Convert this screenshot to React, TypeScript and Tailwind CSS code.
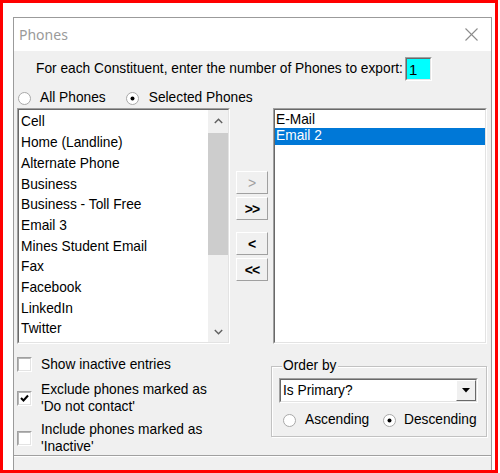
import React from "react";

const font = "font-['Liberation_Sans',Arial,sans-serif]";

function Sunken({ className = "", inner = "bg-white", children }: { className?: string; inner?: string; children?: React.ReactNode }) {
  return (
    <div className={`border border-t-[#a0a0a0] border-l-[#a0a0a0] border-b-white border-r-white ${className}`}>
      <div className={`h-full w-full border border-t-[#696969] border-l-[#696969] border-b-[#e3e3e3] border-r-[#e3e3e3] ${inner}`}>
        {children}
      </div>
    </div>
  );
}

function Radio({ checked }: { checked?: boolean }) {
  return (
    <svg width="13" height="13" viewBox="0 0 13 13" className="shrink-0">
      <circle cx="6.5" cy="6.5" r="6" fill="#ffffff" stroke="#a8a8a8" strokeWidth="1" />
      {checked && <circle cx="6.5" cy="6.5" r="2" fill="#000000" />}
    </svg>
  );
}

function Check({ checked }: { checked?: boolean }) {
  return (
    <div className="h-[15px] w-[15px] shrink-0 border border-t-[#a0a0a0] border-l-[#a0a0a0] border-b-white border-r-white">
      <div className="flex h-full w-full items-center justify-center border border-t-[#b5b5b5] border-l-[#b5b5b5] border-b-[#e3e3e3] border-r-[#e3e3e3] bg-white">
        {checked && (
          <svg width="9" height="9" viewBox="0 0 9 9">
            <polyline points="1,4 3.5,6.5 8,1.5" fill="none" stroke="#000" strokeWidth="2" />
          </svg>
        )}
      </div>
    </div>
  );
}

function Btn({ children, className = "" }: { children: React.ReactNode; className?: string }) {
  return (
    <div
      className={`flex h-[23px] w-[32px] items-center justify-center border border-t-white border-l-white border-b-[#a0a0a0] border-r-[#a0a0a0] bg-[#f0f0f0] text-[14px] leading-none ${className}`}
    >
      {children}
    </div>
  );
}

const leftItems = [
  "Cell",
  "Home (Landline)",
  "Alternate Phone",
  "Business",
  "Business - Toll Free",
  "Email 3",
  "Mines Student Email",
  "Fax",
  "Facebook",
  "LinkedIn",
  "Twitter",
];

export default function App() {
  return (
    <div className={`h-[473px] w-[500px] overflow-hidden bg-white ${font} text-[13.75px] text-black`}>
      <div className="h-[473px] w-[498px] overflow-hidden border-[3px] border-[#ff0000] bg-white pl-[10px] pt-[14px]">
        <div className="flex h-[460px] w-[479px] flex-col border border-[#9b9b9b] bg-[#f0f0f0]">
          {/* title bar */}
          <div className="flex h-[33px] shrink-0 items-center justify-between bg-white pl-[5px] pr-[13px]">
            <span className="font-['Noto_Sans',sans-serif] text-[14px] text-[#9a9a9a]">Phones</span>
            <svg width="13" height="13" viewBox="0 0 13 13">
              <line x1="0.5" y1="0.5" x2="12.5" y2="12.5" stroke="#8c8c8c" strokeWidth="1.1" />
              <line x1="12.5" y1="0.5" x2="0.5" y2="12.5" stroke="#8c8c8c" strokeWidth="1.1" />
            </svg>
          </div>

          {/* body */}
          <div className="flex flex-1 flex-col">
            <div className="mt-[6px] flex h-[24px] items-center pl-[22px]">
              <span className="leading-none">For each Constituent, enter the number of Phones to export:</span>
              <Sunken className="ml-[2px] h-[24px] w-[27px]" inner="bg-[#00ffff]">
                <div className="flex h-full items-center pl-[2px] text-[15px] leading-none">1</div>
              </Sunken>
            </div>

            <div className="mt-[9px] flex h-[16px] items-center pl-[4px]">
              <Radio />
              <span className="ml-[9px] leading-none">All Phones</span>
              <span className="ml-[20px]">
                <Radio checked />
              </span>
              <span className="ml-[10px] leading-none">Selected Phones</span>
            </div>

            <div className="mt-[2px] flex h-[236px] pl-[3px]">
              <Sunken className="h-[236px] w-[213px]">
                <div className="flex h-full">
                  <div className="flex-1 pt-[2px]">
                    {leftItems.map((t) => (
                      <div key={t} className="flex h-[20.7px] items-center pl-[2px] leading-none">
                        {t}
                      </div>
                    ))}
                  </div>
                  <div className="flex w-[20px] flex-col bg-[#f0f0f0]">
                    <div className="flex h-[21px] items-center justify-center">
                      <svg width="9" height="6" viewBox="0 0 9 6">
                        <polyline points="0.8,5 4.5,1.2 8.2,5" fill="none" stroke="#606060" strokeWidth="1.4" />
                      </svg>
                    </div>
                    <div className="mt-[2px] h-[122px] bg-[#cdcdcd]" />
                    <div className="flex-1" />
                    <div className="flex h-[21px] items-center justify-center">
                      <svg width="9" height="6" viewBox="0 0 9 6">
                        <polyline points="0.8,1 4.5,4.8 8.2,1" fill="none" stroke="#606060" strokeWidth="1.4" />
                      </svg>
                    </div>
                  </div>
                </div>
              </Sunken>

              <div className="ml-[6px] flex w-[32px] flex-col pt-[63px]">
                <Btn className="text-[#a0a0a0]">&gt;</Btn>
                <Btn className="mt-[3px] font-bold tracking-[-1px]">&gt;&gt;</Btn>
                <Btn className="mt-[12px] font-bold">&lt;</Btn>
                <Btn className="mt-[3px] font-bold tracking-[-1px]">&lt;&lt;</Btn>
              </div>

              <Sunken className="ml-[5px] h-[236px] w-[214px]">
                <div className="pt-[1.5px]">
                  <div className="flex h-[16.5px] items-center pl-[1px] leading-none">E-Mail</div>
                  <div className="flex h-[16.5px] items-center bg-[#0078d7] pl-[1px] leading-none text-white">Email 2</div>
                </div>
              </Sunken>
            </div>

            <div className="flex pl-[3px]">
              <div className="flex w-[254px] flex-col">
                <div className="mt-[13px] flex h-[15px] items-center gap-[9px]">
                  <Check />
                  <span className="leading-none">Show inactive entries</span>
                </div>
                <div className="mt-[10px] flex items-center gap-[9px]">
                  <Check checked />
                  <span className="leading-[16.5px]">
                    Exclude phones marked as
                    <br />
                    'Do not contact'
                  </span>
                </div>
                <div className="mt-[7px] flex items-center gap-[9px]">
                  <Check />
                  <span className="leading-[16.5px]">
                    Include phones marked as
                    <br />
                    'Inactive'
                  </span>
                </div>
              </div>

              <div className="relative mt-[22px] h-[71px] w-[216px] border border-[#c2c2c2] shadow-[inset_1px_1px_0_#ffffff,1px_1px_0_#ffffff]">
                <span className="absolute left-[10px] top-[-9px] bg-[#f0f0f0] px-[1px] leading-[16px]">Order by</span>
                <Sunken className="ml-[7px] mt-[11px] h-[25px] w-[199px]">
                  <div className="flex h-full items-center justify-between">
                    <span className="pl-[2px] leading-none">Is Primary?</span>
                    <div className="flex h-full w-[20px] items-center justify-center border border-t-white border-l-white border-b-[#696969] border-r-[#696969] bg-[#f0f0f0]">
                      <svg width="8" height="5" viewBox="0 0 8 5">
                        <polygon points="0,0 8,0 4,4.5" fill="#000" />
                      </svg>
                    </div>
                  </div>
                </Sunken>
                <div className="ml-[11px] mt-[9px] flex h-[16px] items-center">
                  <div className="flex w-[100px] items-center">
                    <Radio />
                    <span className="ml-[9px] leading-none">Ascending</span>
                  </div>
                  <Radio checked />
                  <span className="ml-[8px] leading-none">Descending</span>
                </div>
              </div>
            </div>

            <div className="h-[1px] bg-[#a0a0a0]" />
            <div className="h-[1px] bg-white" />
          </div>
        </div>
      </div>
    </div>
  );
}
